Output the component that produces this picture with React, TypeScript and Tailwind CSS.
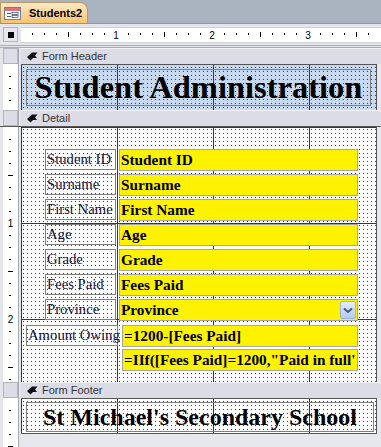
import React from "react";

const serif = "font-['Liberation_Serif','Times_New_Roman',serif]";

// dotted design grid + inch lines
const gridV =
  "[background-image:linear-gradient(to_right,#3a3a3a_1px,transparent_1px),conic-gradient(at_1px_1px,transparent_75%,#3c3c3c_0)] [background-size:96px_100%,4px_4px] [background-position:0_0,2px_2px]";
const gridVH =
  "[background-image:linear-gradient(to_right,#3a3a3a_1px,transparent_1px),linear-gradient(to_bottom,#3a3a3a_1px,transparent_1px),conic-gradient(at_1px_1px,transparent_75%,#3c3c3c_0)] [background-size:96px_100%,100%_96px,4px_4px] [background-position:0_0,0_0,2px_2px]";

const fields = ["Student ID", "Surname", "First Name", "Age", "Grade", "Fees Paid", "Province"];

function FormIcon() {
  return (
    <svg width="17" height="13" viewBox="0 0 17 13">
      <rect x="0.5" y="0.5" width="16" height="12" fill="#fff" stroke="#6d7f99" />
      <rect x="1" y="1" width="15" height="3" fill="#e0707a" />
      <rect x="3" y="6" width="4" height="1" fill="#4d5e7a" />
      <rect x="8" y="5.5" width="6" height="2" fill="#fff" stroke="#4d5e7a" strokeWidth="0.8" />
      <rect x="3" y="9" width="4" height="1" fill="#4d5e7a" />
      <rect x="8" y="8.5" width="6" height="2" fill="#fff" stroke="#4d5e7a" strokeWidth="0.8" />
    </svg>
  );
}

function BarIcon() {
  return (
    <svg width="11" height="9" viewBox="0 0 11 9">
      <path d="M0 5 L5 0.5 H10.5 L8 3.5 L10 6 H6 L3.5 8.5 Z" fill="#111" />
    </svg>
  );
}

function HRuler() {
  const ticks = [];
  for (let i = 1; i * 12 < 360; i++) {
    const x = i * 12 - 1;
    if (i % 8 === 0) {
      ticks.push(
        <text key={i} x={x} y="11" fontSize="10" textAnchor="middle" fill="#000" fontFamily="Liberation Sans, Arial, sans-serif">
          {i / 8}
        </text>
      );
    } else if (i % 4 === 0) {
      ticks.push(<rect key={i} x={x} y="4" width="1" height="5" fill="#000" />);
    } else {
      ticks.push(<rect key={i} x={x} y="5" width="1" height="2" fill="#000" />);
    }
  }
  return (
    <svg width="360" height="15" className="block">
      {ticks}
    </svg>
  );
}

function VRuler({ height, offset = 0 }: { height: number; offset?: number }) {
  const ticks = [];
  for (let i = 1; i * 12 - offset < height + 12; i++) {
    const y = i * 12 - offset;
    if (y < 0) continue;
    if (i % 8 === 0) {
      ticks.push(
        <text key={i} x="7.5" y={y + 4} fontSize="10" textAnchor="middle" fill="#000" fontFamily="Liberation Sans, Arial, sans-serif">
          {i / 8}
        </text>
      );
    } else if (i % 4 === 0) {
      ticks.push(<rect key={i} x="5" y={y} width="5" height="1" fill="#000" />);
    } else {
      ticks.push(<rect key={i} x="6" y={y} width="2" height="1" fill="#000" />);
    }
  }
  return (
    <div className="w-[21px] flex bg-[#e3e5ea]">
      <div className="w-[3px]" />
      <div className="w-[15px] bg-white" style={{ height }}>
        <svg width="15" height={height} className="block">
          {ticks}
        </svg>
      </div>
      <div className="w-[1px] bg-[#a7a9b3]" />
      <div className="w-[2px]" />
    </div>
  );
}

function Bar({ title }: { title: string }) {
  return (
    <div className="flex h-[16px]">
      <div className="w-[21px] flex bg-[#e3e5ea]">
        <div className="w-[3px]" />
        <div className="w-[15px] bg-[#dcdce6] border border-[#b2b4c0]" />
        <div className="w-[1px] bg-[#a7a9b3]" />
        <div className="w-[2px]" />
      </div>
      <div className="flex-1 flex items-center gap-[4px] pl-[6px] bg-[#dcdce6] border-t border-[#f4f4f8]">
        <BarIcon />
        <span className="text-[11px] text-[#333] leading-none">{title}</span>
      </div>
    </div>
  );
}

function Label({ text, w }: { text: string; w: string }) {
  return (
    <div className={`${w} h-[21px] border border-[#7f7f7f] flex items-center px-[1px] text-[14.7px] text-[#10103a] leading-none whitespace-nowrap ${serif}`}>
      {text}
    </div>
  );
}

function TextBox({ text, dropdown }: { text: string; dropdown?: boolean }) {
  return (
    <div className={`flex-1 h-[22px] bg-[#fff200] border border-[#a6a6a6] flex items-center pl-[1px] font-bold text-[15.3px] text-black leading-none whitespace-nowrap overflow-hidden ${serif}`}>
      <span className="flex-1">{text}</span>
      {dropdown && (
        <div className="w-[16px] h-[18px] mr-[1px] rounded-[2px] border border-[#9db4d8] bg-gradient-to-b from-[#e2ecfa] to-[#b4cbee] flex items-center justify-center">
          <svg width="10" height="7" viewBox="0 0 10 7">
            <path d="M1 1.5 L5 5 L9 1.5" fill="none" stroke="#46577a" strokeWidth="2" />
          </svg>
        </div>
      )}
    </div>
  );
}

export default function App() {
  return (
    <div className="w-[381px] h-[447px] overflow-hidden bg-[#e6e8ed] font-['Liberation_Sans',Arial,sans-serif]">
      {/* document tab */}
      <div className="h-[24px] bg-[#aab4c1] border-b border-[#8d97a2] flex items-end">
        <div className="h-[21px] w-[88px] rounded-tr-[8px] border border-b-0 border-[#b99863] bg-gradient-to-b from-[#fde9c4] to-[#f7c370] flex items-center gap-[8px] pl-[3px]">
          <FormIcon />
          <span className="text-[11px] font-bold text-black">Students2</span>
        </div>
      </div>

      {/* horizontal ruler */}
      <div className="h-[24px] bg-[#e3e5ea] border-b-[3px] border-double border-[#a9abb6] flex pt-[3px]">
        <div className="ml-[3px] w-[15px] h-[15px] border border-[#b2b4c0] bg-[#e6e6ee] flex items-center justify-center">
          <div className="w-[6px] h-[6px] bg-black" />
        </div>
        <div className="ml-[3px] flex-1 h-[16px] bg-white border-y border-[#d0d2da]">
          <HRuler />
        </div>
      </div>

      <Bar title="Form Header" />
      <div className="flex">
        <VRuler height={46} />
        <div className={`w-[356px] h-[46px] bg-[#c6d9f1] ${gridV} border-t border-r border-[#555] pl-[5px] pt-[4px]`}>
          <div className={`w-[345px] h-[37px] border border-[#7f7f7f] flex items-center justify-center font-bold text-[32.5px] text-black leading-none whitespace-nowrap ${serif}`}>
            Student Administration
          </div>
        </div>
      </div>

      <Bar title="Detail" />
      <div className="flex border-t border-[#555]">
        <VRuler height={255} />
        <div className={`w-[356px] h-[255px] bg-white ${gridVH} border-r border-[#555] pt-[22px] flex flex-col`}>
          <div className="flex flex-col gap-[3px]">
            {fields.map((f) => (
              <div key={f} className="flex items-start gap-[3px] pl-[24px] w-[337px]">
                <Label text={f} w="w-[71px]" />
                <TextBox text={f} dropdown={f === "Province"} />
              </div>
            ))}
          </div>
          <div className="flex items-start gap-[4px] pl-[5px] w-[337px] mt-[4px]">
            <Label text="Amount Owing" w="w-[92px]" />
            <TextBox text="=1200-[Fees Paid]" />
          </div>
          <div className="flex pl-[101px] w-[337px] mt-[2px]">
            <TextBox text={'=IIf([Fees Paid]=1200,"Paid in full\''} />
          </div>
        </div>
      </div>

      <Bar title="Form Footer" />
      <div className="flex">
        <VRuler height={36} />
        <div className={`w-[356px] h-[36px] bg-white ${gridV} border-y border-[#555] border-r pl-[5px] pt-[3px]`}>
          <div className={`w-[348px] h-[30px] border border-[#7f7f7f] flex items-center justify-center font-bold text-[24px] text-black leading-none whitespace-nowrap ${serif}`}>
            St Michael's Secondary School
          </div>
        </div>
      </div>
      <div className="flex">
        <VRuler height={20} offset={36} />
      </div>
    </div>
  );
}
